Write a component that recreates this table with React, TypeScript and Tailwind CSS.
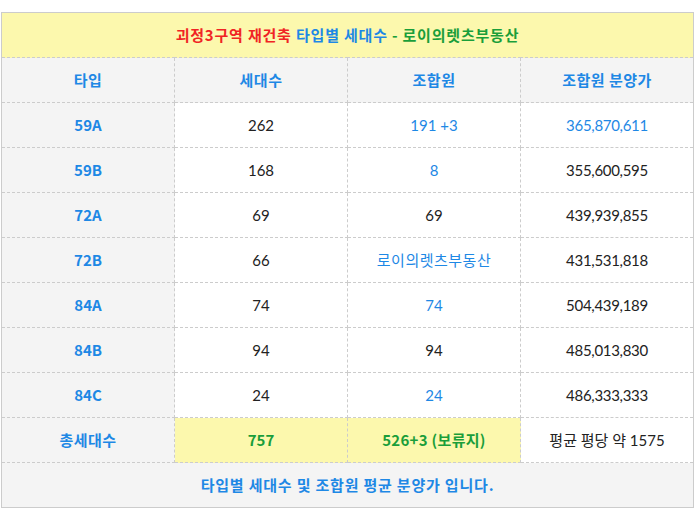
import React from "react";

const rows = [
  { type: "59A", units: "262", members: "191 +3", memberBlue: true, price: "365,870,611", priceBlue: true },
  { type: "59B", units: "168", members: "8", memberBlue: true, price: "355,600,595", priceBlue: false },
  { type: "72A", units: "69", members: "69", memberBlue: false, price: "439,939,855", priceBlue: false },
  { type: "72B", units: "66", members: "로이의렛츠부동산", memberBlue: true, price: "431,531,818", priceBlue: false },
  { type: "84A", units: "74", members: "74", memberBlue: true, price: "504,439,189", priceBlue: false },
  { type: "84B", units: "94", members: "94", memberBlue: false, price: "485,013,830", priceBlue: false },
  { type: "84C", units: "24", members: "24", memberBlue: true, price: "486,333,333", priceBlue: false },
];

const cell = "h-[45px] border border-dashed border-[#cccccc] text-center align-middle";
const num = "font-['Lato','Noto_Sans_CJK_KR',sans-serif]";

export default function App() {
  return (
    <div className="bg-white w-[695px] h-[521px] pt-[12px] pl-[1px] font-['Noto_Sans_CJK_KR','Noto_Sans',sans-serif] text-[15px] text-[#222]">
      <table className="w-[693px] table-fixed border-collapse border border-solid border-[#cccccc]">
        <tbody>
          <tr>
            <td colSpan={4} className={`${cell} bg-[#fcf8ad] font-semibold tracking-[0.8px]`}>
              <span className="text-[#f02424]">괴정3구역 재건축</span>{" "}
              <span className="text-[#1e88e5]">타입별 세대수</span>{" "}
              <span className="text-[#1a9e3a]">- 로이의렛츠부동산</span>
            </td>
          </tr>
          <tr className="bg-[#f4f4f4] text-[#1e88e5] font-semibold tracking-[0.5px]">
            <td className={cell}>타입</td>
            <td className={cell}>세대수</td>
            <td className={cell}>조합원</td>
            <td className={cell}>조합원 분양가</td>
          </tr>
          {rows.map((r) => (
            <tr key={r.type}>
              <td className={`${cell} bg-[#f4f4f4] text-[#1e88e5] font-semibold`}>{r.type}</td>
              <td className={`${cell} ${num} bg-white`}>{r.units}</td>
              <td className={`${cell} ${num} bg-white ${/\d/.test(r.members) ? "" : "tracking-[0.5px]"} ${r.memberBlue ? "text-[#1e88e5]" : ""}`}>{r.members}</td>
              <td className={`${cell} ${num} bg-white tracking-[-0.3px] ${r.priceBlue ? "text-[#1e88e5]" : ""}`}>{r.price}</td>
            </tr>
          ))}
          <tr>
            <td className={`${cell} bg-[#f4f4f4] text-[#1e88e5] font-semibold tracking-[0.5px]`}>총세대수</td>
            <td className={`${cell} bg-[#fcf8ad] text-[#1a9e3a] font-semibold`}>757</td>
            <td className={`${cell} bg-[#fcf8ad] text-[#1a9e3a] font-semibold tracking-[0.3px]`}>526+3 (보류지)</td>
            <td className={`${cell} ${num} bg-white`}>평균 평당 약 1575</td>
          </tr>
          <tr>
            <td colSpan={4} className={`${cell} bg-[#f4f4f4] text-[#1e88e5] font-semibold tracking-[0.8px]`}>
              타입별 세대수 및 조합원 평균 분양가 입니다.
            </td>
          </tr>
        </tbody>
      </table>
    </div>
  );
}
